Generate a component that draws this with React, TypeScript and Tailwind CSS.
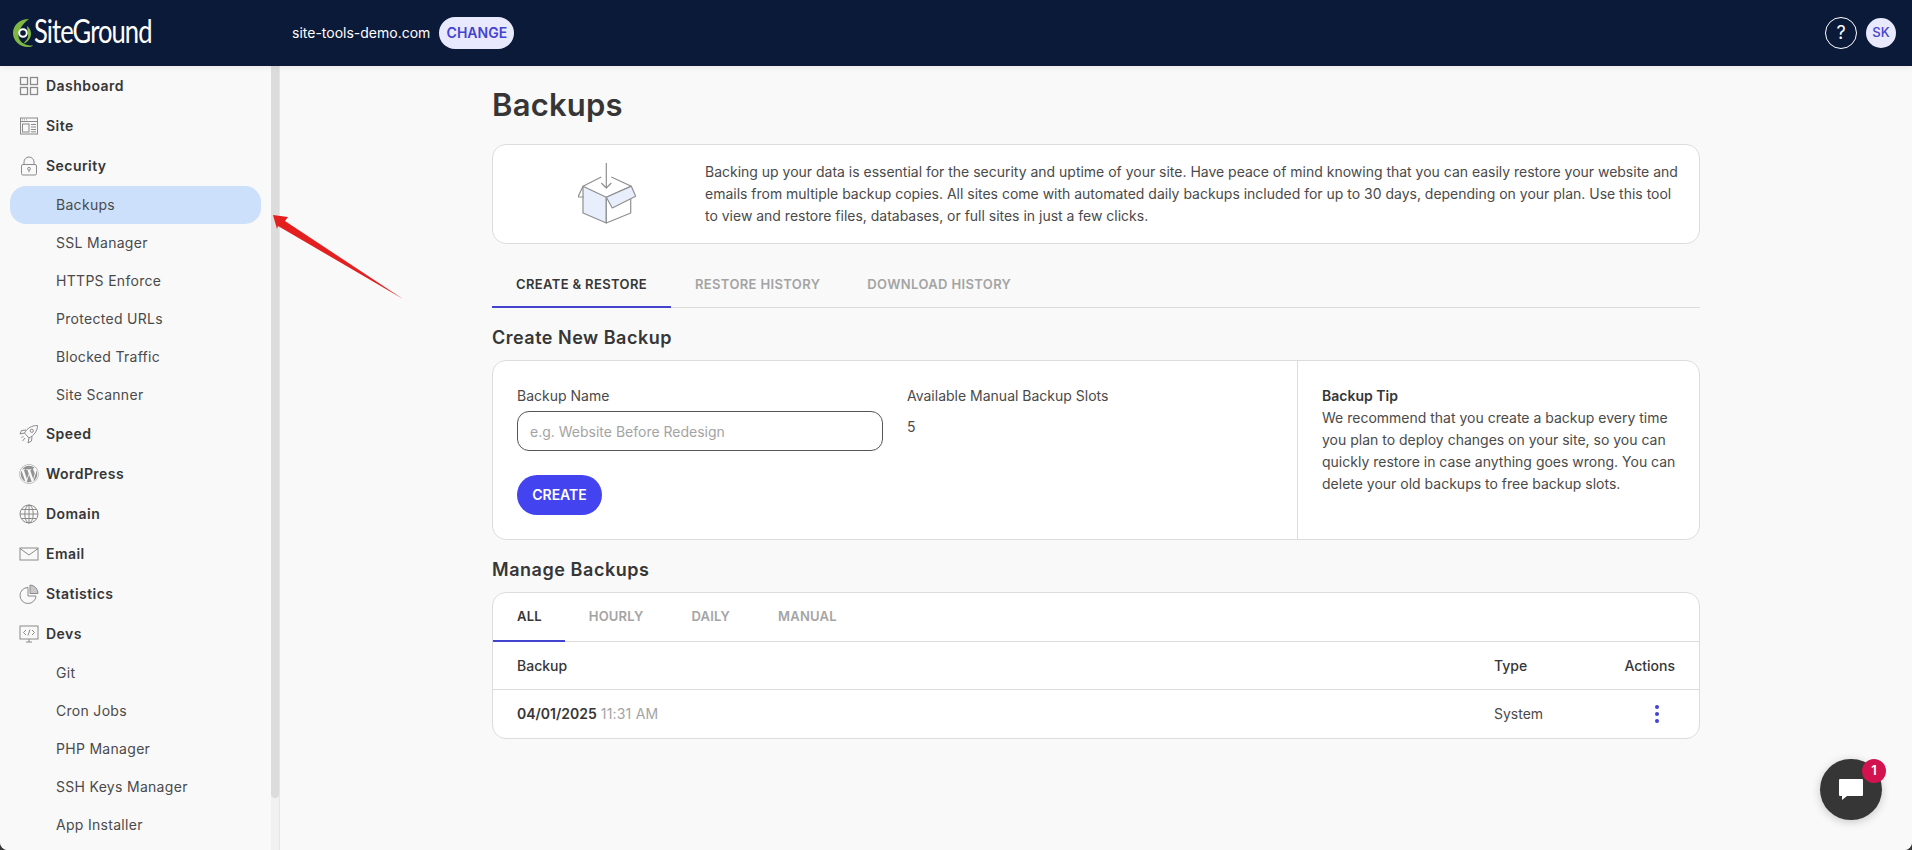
import React from "react";
import { FaWordpress } from "react-icons/fa";

const I = "stroke-[#8a8a8a] fill-none";

function Icon({ children }: { children: React.ReactNode }) {
  return (
    <svg width="20" height="20" viewBox="0 0 20 20" className={`${I} shrink-0`} strokeWidth="1">
      {children}
    </svg>
  );
}

const icons: Record<string, React.ReactNode> = {
  Dashboard: (
    <Icon>
      <rect x="1.5" y="1.5" width="7" height="7" strokeWidth="1.3" />
      <rect x="11.5" y="1.5" width="7" height="7" strokeWidth="1.3" />
      <rect x="1.5" y="11.5" width="7" height="7" strokeWidth="1.3" />
      <rect x="11.5" y="11.5" width="7" height="7" strokeWidth="1.3" />
    </Icon>
  ),
  Site: (
    <Icon>
      <rect x="1.5" y="2" width="17" height="16" />
      <path d="M1.5 5.5h17M3 3.8h.8M5 3.8h.8M7 3.8h.8" />
      <rect x="3.5" y="8" width="6.5" height="8" />
      <path d="M12 8.5h5M12 11h5M12 13.5h5M12 15.8h5" />
    </Icon>
  ),
  Security: (
    <Icon>
      <rect x="2.5" y="8.5" width="15" height="10.5" rx="1.5" />
      <path d="M5 8.5V6a5 5 0 0 1 10 0v2.5" />
      <circle cx="10" cy="12.8" r="1.4" />
      <path d="M10 14.2v2" />
    </Icon>
  ),
  Speed: (
    <Icon>
      <path d="M18.5 1.5C13 1.5 8 4 5.5 9l4.5 5c5-2.5 8.5-7 8.5-12.5z" />
      <circle cx="12.8" cy="6.8" r="1.6" />
      <path d="M7 6 2.5 6.5 1 10l4.5-1M13 12.5 12.5 17 9 19l1-5M4.5 12l-2 2M6 14l-2.5 3" />
    </Icon>
  ),
  Domain: (
    <Icon>
      <circle cx="10" cy="10" r="9" />
      <ellipse cx="10" cy="10" rx="4.2" ry="9" />
      <path d="M10 1v18M1 10h18M2.3 5.5h15.4M2.3 14.5h15.4" />
    </Icon>
  ),
  Email: (
    <Icon>
      <rect x="1" y="4" width="18" height="12" />
      <path d="m1 4.5 9 6.5 9-6.5" />
    </Icon>
  ),
  Statistics: (
    <Icon>
      <path d="M9 3.5a8 8 0 1 0 8 8.5H9z" />
      <path d="M11 1v8.5h8A8.5 8.5 0 0 0 11 1z" fill="#c9c9c9" />
    </Icon>
  ),
  Devs: (
    <Icon>
      <rect x="1" y="2" width="18" height="13" />
      <path d="M7 18h6M10 15v3M7 6 4.5 8.5 7 11M13 6l2.5 2.5L13 11M11 5.5l-2 6" />
    </Icon>
  ),
};

function TopItem({ label }: { label: string }) {
  return (
    <div className="h-10 flex items-center pl-[19px] gap-[7px]">
      {label === "WordPress" ? (
        <FaWordpress className="w-5 h-5 text-[#929292] shrink-0" />
      ) : (
        icons[label]
      )}
      <span className="text-sm font-semibold text-[#363636] tracking-[0.45px]">{label}</span>
    </div>
  );
}

function SubItem({ label, active }: { label: string; active?: boolean }) {
  return (
    <div
      className={`h-[38px] flex items-center pl-[46px] ml-[10px] mr-[10px] rounded-2xl text-sm text-[#4a4a4a] tracking-[0.3px] ${
        active ? "bg-[#cce0fb]" : ""
      }`}
    >
      {label}
    </div>
  );
}

function Sidebar() {
  return (
    <aside className="w-[280px] shrink-0 flex bg-[#f9f9f9] overflow-hidden">
      <nav className="w-[271px] shrink-0">
        <TopItem label="Dashboard" />
        <TopItem label="Site" />
        <TopItem label="Security" />
        <SubItem label="Backups" active />
        <SubItem label="SSL Manager" />
        <SubItem label="HTTPS Enforce" />
        <SubItem label="Protected URLs" />
        <SubItem label="Blocked Traffic" />
        <SubItem label="Site Scanner" />
        <TopItem label="Speed" />
        <TopItem label="WordPress" />
        <TopItem label="Domain" />
        <TopItem label="Email" />
        <TopItem label="Statistics" />
        <TopItem label="Devs" />
        <SubItem label="Git" />
        <SubItem label="Cron Jobs" />
        <SubItem label="PHP Manager" />
        <SubItem label="SSH Keys Manager" />
        <SubItem label="App Installer" />
      </nav>
      <div className="w-[9px] shrink-0 bg-[#f1f1f1] border-r border-[#e6e6e6]">
        <div className="h-[732px] bg-[#dcdcdc] rounded-b-md" />
      </div>
    </aside>
  );
}

function Tab({ label, active, pad, wide }: { label: string; active?: boolean; pad: string; wide?: boolean }) {
  return (
    <div
      className={`${pad} flex items-center font-semibold text-[13px] -mb-px border-b-2 ${
        wide ? "tracking-[0.36px]" : "tracking-[0.2px]"
      } ${active ? "text-[#363636] border-[#4343d0]" : "text-[#a4a4a4] border-transparent"}`}
    >
      {label}
    </div>
  );
}

function BoxIcon() {
  return (
    <svg width="58" height="62" viewBox="0 0 58 62" fill="none" stroke="#8f8f8f" strokeWidth="1.2" strokeLinejoin="round">
      <path d="M5 23.3 28.3 34.3V60L5 50z" fill="#e8eefb" />
      <path d="M28.3 34.3 52.7 23.3V50L28.3 60z" fill="#fff" />
      <path d="M5 23.3 23.3 14M33.3 14 53.3 23.3M5 23.3 0 34h5.7" />
      <path d="M28.3 34.3 53.3 23.3 57.7 33.3 34.3 45z" fill="#e8eefb" />
      <path d="M28.3 0v25M23.3 20l5 5 5-5" />
    </svg>
  );
}

function Logo() {
  return (
    <div className="flex items-center w-[141px]">
      <svg width="21" height="30" viewBox="0 0 21 30" fill="none" className="shrink-0">
        <path d="M17 1C8 1 1 7 1 15c0 8 7 14 15 14 2 0 4-.5 5-1.5-6 .5-12-2-14-7C5 15 9 7 17 1z" fill="#7fb841" />
        <path d="M15 8c4 3 5 8 3 12-1.5 3-4 5-7 6 2-3 6-5 5-10 0-3-1-6-1-8z" fill="#7fb841" />
        <circle cx="11" cy="15" r="3.8" stroke="#fff" strokeWidth="2" />
      </svg>
      <span className="block text-[32px] leading-none text-white font-['Lato',sans-serif] tracking-[-1.2px] scale-x-[0.8] origin-left -mt-1 ml-px">
        SiteGround
      </span>
    </div>
  );
}

function Header() {
  return (
    <header className="relative z-10 h-[66px] shrink-0 bg-[#0c1a3a] flex items-center pl-[12px] pr-4 shadow-[0_1px_6px_rgba(0,0,0,0.08)]">
      <Logo />
      <div className="ml-[139px] text-sm text-white">site-tools-demo.com</div>
      <div className="ml-[9px] h-8 w-[75px] rounded-2xl bg-[#e8e9fd] text-[#4343d0] text-sm font-semibold flex items-center justify-center">
        CHANGE
      </div>
      <div className="ml-auto flex items-center gap-[9px]">
        <div className="w-8 h-8 rounded-full border-[1.5px] border-white text-white text-lg flex items-center justify-center">
          ?
        </div>
        <div className="w-[30px] h-[30px] rounded-full bg-[#e8e9fd] text-[#4343d0] text-[13px] font-medium flex items-center justify-center">
          SK
        </div>
      </div>
    </header>
  );
}

function Main() {
  return (
    <main className="flex-1 min-w-0 bg-[#f9f9f9]">
      <div className="w-[1208px] mx-auto pt-[18px]">
        <h1 className="text-[31px] leading-[42px] font-semibold text-[#363636] tracking-[0.2px]">Backups</h1>

        <section className="mt-[18px] h-[100px] bg-white border border-[#dcdcdc] rounded-[14px] flex items-center">
          <div className="w-[212px] shrink-0 flex justify-center pl-[16px] pr-0">
            <BoxIcon />
          </div>
          <p className="text-sm leading-[22px] text-[#4a4a4a] pr-4 tracking-[-0.01px]">
            Backing up your data is essential for the security and uptime of your site. Have peace of mind knowing that
            you can easily restore your website and emails from multiple backup copies. All sites come with automated
            daily backups included for up to 30 days, depending on your plan. Use this tool to view and restore files,
            databases, or full sites in just a few clicks.
          </p>
        </section>

        <div className="mt-[19px] h-[45px] flex border-b border-[#dcdcdc]">
          <Tab label="CREATE & RESTORE" active pad="px-6" wide />
          <Tab label="RESTORE HISTORY" pad="pl-6 pr-[23px]" wide />
          <Tab label="DOWNLOAD HISTORY" pad="px-6" wide />
        </div>

        <h2 className="mt-[18px] text-lg leading-6 font-semibold text-[#363636] tracking-[0.5px]">Create New Backup</h2>

        <section className="mt-[10px] h-[180px] bg-white border border-[#dcdcdc] rounded-[14px] flex">
          <div className="w-[805px] shrink-0 border-r border-[#dcdcdc] px-6 pt-[25px]">
            <div className="flex gap-6">
              <div className="w-[366px]">
                <div className="text-sm leading-5 text-[#4a4a4a]">Backup Name</div>
                <input
                  placeholder="e.g. Website Before Redesign"
                  className="mt-[5px] w-full h-10 rounded-xl border border-[#555] px-3 text-sm bg-white placeholder:text-[#a4a4a4]"
                />
              </div>
              <div>
                <div className="text-sm leading-5 text-[#4a4a4a]">Available Manual Backup Slots</div>
                <div className="mt-[11px] text-sm leading-5 text-[#4a4a4a]">5</div>
              </div>
            </div>
            <button className="mt-6 w-[85px] h-10 rounded-[20px] bg-[#4343f0] text-white text-sm font-semibold">
              CREATE
            </button>
          </div>
          <div className="flex-1 pl-6 pr-5 pt-[24px] text-sm leading-[22px] text-[#4a4a4a]">
            <div className="font-semibold text-[#363636]">Backup Tip</div>
            <p>
              We recommend that you create a backup every time you plan to deploy changes on your site, so you can
              quickly restore in case anything goes wrong. You can delete your old backups to free backup slots.
            </p>
          </div>
        </section>

        <h2 className="mt-[18px] text-lg leading-6 font-semibold text-[#363636] tracking-[0.55px]">Manage Backups</h2>

        <section className="mt-[10px] h-[147px] bg-white border border-[#dcdcdc] rounded-[14px] overflow-hidden">
          <div className="h-[49px] flex border-b border-[#dcdcdc]">
            <Tab label="ALL" active pad="pl-6 pr-[23px]" />
            <Tab label="HOURLY" pad="px-6" />
            <Tab label="DAILY" pad="px-6" />
            <Tab label="MANUAL" pad="px-6" />
          </div>
          <div className="h-[48px] flex items-center pl-6 pr-6 border-b border-[#dcdcdc] text-sm font-medium text-[#363636]">
            <div className="flex-1">Backup</div>
            <div className="w-[129px]">Type</div>
            <div className="w-[52px] text-right whitespace-nowrap">Actions</div>
          </div>
          <div className="h-[48px] flex items-center pl-6 pr-6 text-sm text-[#4a4a4a]">
            <div className="flex-1">
              <span className="font-semibold text-[#363636]">04/01/2025</span>{" "}
              <span className="text-[#a4a4a4] tracking-[0.2px]">11:31 AM</span>
            </div>
            <div className="w-[129px]">System</div>
            <div className="w-[52px] flex justify-end pr-[16px]">
              <div className="flex flex-col gap-[3px]">
                <div className="w-1 h-1 rounded-full bg-[#4343d0]" />
                <div className="w-1 h-1 rounded-full bg-[#4343d0]" />
                <div className="w-1 h-1 rounded-full bg-[#4343d0]" />
              </div>
            </div>
          </div>
        </section>
      </div>
    </main>
  );
}

export default function App() {
  return (
    <div className="h-screen bg-[#3a3a3a] font-['Inter',sans-serif]">
      <div className="relative h-full rounded-b-[8px] overflow-hidden bg-[#f9f9f9] flex flex-col">
        <Header />
        <div className="flex-1 min-h-0 flex overflow-hidden">
          <Sidebar />
          <Main />
        </div>

        <svg className="absolute left-[270px] top-[212px] pointer-events-none" width="135" height="90" viewBox="0 0 135 90">
          <polygon points="3,3 18,5 15,9 133,87 8,14 7,17" fill="#e3201f" />
        </svg>

        <div className="absolute left-[1820px] top-[759px] w-[62px] h-[61px] rounded-full bg-[#363636] shadow-[0_2px_10px_rgba(0,0,0,0.2)] flex items-center justify-center">
          <svg width="24" height="21" viewBox="0 0 24 21" fill="#fff">
            <path d="M1 0h22a1 1 0 0 1 1 1v15a1 1 0 0 1-1 1H8l-5 4v-4H1a1 1 0 0 1-1-1V1a1 1 0 0 1 1-1z" />
          </svg>
          <div className="absolute -top-[0px] left-[42px] w-6 h-6 rounded-full bg-[#d3134f] text-white text-[13px] font-semibold flex items-center justify-center">
            1
          </div>
        </div>
      </div>
    </div>
  );
}
